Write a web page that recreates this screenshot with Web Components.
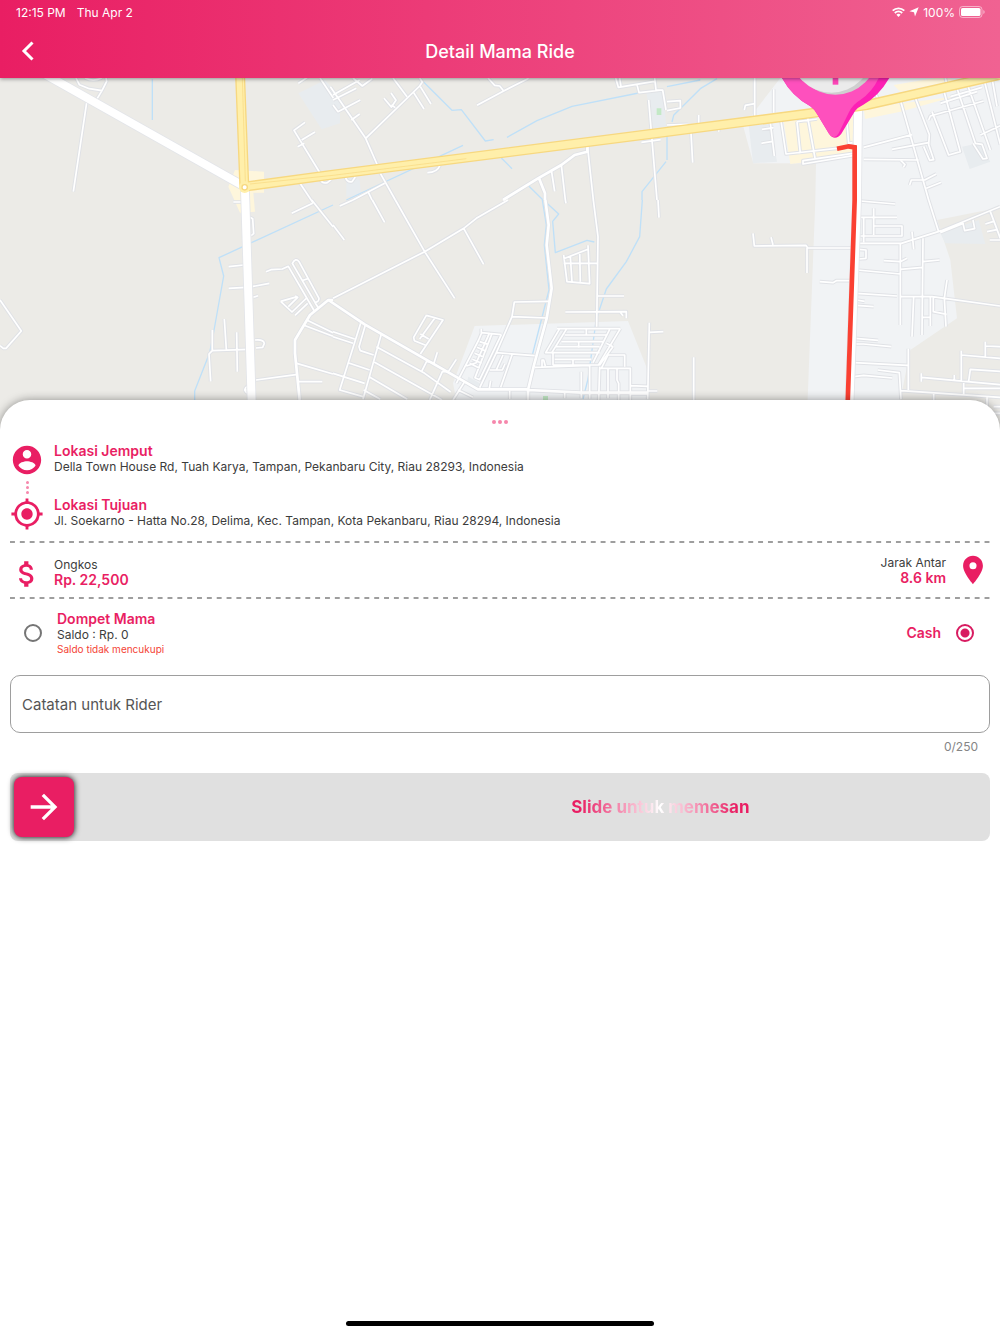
<!DOCTYPE html>
<html lang="id">
<head>
<meta charset="utf-8">
<meta name="viewport" content="width=device-width, initial-scale=1">
<title>Detail Mama Ride</title>
<style>
  html, body { margin: 0; }
  body {
    font-family: Inter, Roboto, "Liberation Sans", sans-serif;
    color: #3c3c3c;
    background: #fff;
    --pink: #e91e63;
  }
</style>
</head>
<body>
<ride-page>
  <app-bar slot="bar" heading="Detail Mama Ride" time="12:15 PM" date="Thu Apr 2" battery="100%"></app-bar>
  <ride-map slot="map"></ride-map>
  <location-row icon="person" heading="Lokasi Jemput">Della Town House Rd, Tuah Karya, Tampan, Pekanbaru City, Riau 28293, Indonesia</location-row>
  <dot-trail></dot-trail>
  <location-row icon="target" heading="Lokasi Tujuan">Jl. Soekarno - Hatta No.28, Delima, Kec. Tampan, Kota Pekanbaru, Riau 28294, Indonesia</location-row>
  <dash-line class="spaced"></dash-line>
  <fare-summary fare="Rp. 22,500" distance="8.6 km"></fare-summary>
  <dash-line></dash-line>
  <payment-options></payment-options>
  <rider-note max="250"></rider-note>
  <slide-button>Slide untuk memesan</slide-button>
</ride-page>

<script>
const icons = {
  person: '<path d="M12 2C6.48 2 2 6.48 2 12s4.48 10 10 10 10-4.48 10-10S17.52 2 12 2zm0 3c1.66 0 3 1.34 3 3s-1.34 3-3 3-3-1.34-3-3 1.34-3 3-3zm0 14.2c-2.5 0-4.71-1.28-6-3.22.03-1.99 4-3.08 6-3.08 1.99 0 5.97 1.09 6 3.08-1.29 1.94-3.5 3.22-6 3.22z"/>',
  target: '<path d="M12 8c-2.21 0-4 1.79-4 4s1.79 4 4 4 4-1.79 4-4-1.79-4-4-4zm8.94 3A8.994 8.994 0 0 0 13 3.06V1h-2v2.06A8.994 8.994 0 0 0 3.06 11H1v2h2.06A8.994 8.994 0 0 0 11 20.94V23h2v-2.06A8.994 8.994 0 0 0 20.94 13H23v-2h-2.06zM12 19c-3.87 0-7-3.13-7-7s3.13-7 7-7 7 3.13 7 7-3.13 7-7 7z"/>',
  money: '<path d="M11.8 10.9c-2.27-.59-3-1.2-3-2.15 0-1.09 1.01-1.85 2.7-1.85 1.78 0 2.44.85 2.5 2.1h2.21c-.07-1.72-1.12-3.3-3.21-3.81V3h-3v2.16c-1.94.42-3.5 1.68-3.5 3.61 0 2.31 1.91 3.46 4.7 4.13 2.5.6 3 1.48 3 2.41 0 .69-.49 1.79-2.7 1.79-2.06 0-2.87-.92-2.98-2.1h-2.2c.12 2.19 1.76 3.42 3.68 3.83V21h3v-2.15c1.95-.37 3.5-1.5 3.5-3.55 0-2.84-2.43-3.81-4.7-4.4z"/>',
  place: '<path d="M12 2C8.13 2 5 5.13 5 9c0 5.25 7 13 7 13s7-7.75 7-13c0-3.87-3.13-7-7-7zm0 9.5a2.5 2.5 0 1 1 0-5 2.5 2.5 0 0 1 0 5z"/>',
  forward: '<path d="M12 4l-1.41 1.41L16.17 11H4v2h12.17l-5.58 5.59L12 20l8-8z"/>'
};

function icon(name, size = 34) {
  return `<svg width="${size}" height="${size}" viewBox="0 0 24 24" fill="currentColor" aria-hidden="true">${icons[name]}</svg>`;
}

class RidePage extends HTMLElement {
  connectedCallback() {
    this.attachShadow({ mode: 'open' }).innerHTML = `
      <style>
        :host { display: flex; flex-direction: column; min-height: 100vh; }
        .sheet {
          position: relative;
          flex: 1;
          display: flex;
          flex-direction: column;
          box-sizing: border-box;
          margin-top: -30px;
          padding: 20px 10px 8px;
          border-radius: 30px 30px 0 0;
          background: #fff;
          box-shadow: 0 0 10px rgba(0,0,0,0.4);
        }
        .handle { display: flex; justify-content: center; gap: 2px; margin-bottom: 19px; }
        .handle i { width: 4px; height: 4px; border-radius: 50%; background: #f687ac; }
        ::slotted(.spaced) { margin-top: 10px; }
        .home { width: 308px; height: 5px; margin: auto auto 0; border-radius: 3px; background: #000; }
      </style>
      <slot name="bar"></slot>
      <slot name="map"></slot>
      <main class="sheet">
        <div class="handle"><i></i><i></i><i></i></div>
        <slot></slot>
        <div class="home"></div>
      </main>`;
  }
}

class AppBar extends HTMLElement {
  connectedCallback() {
    const get = name => this.getAttribute(name);
    this.attachShadow({ mode: 'open' }).innerHTML = `
      <style>
        :host {
          display: block;
          position: relative;
          z-index: 1;
          color: #fff;
          background: linear-gradient(90deg, #e91e63, #f06292);
          box-shadow: 0 1px 4px rgba(0,0,0,0.4);
        }
        .status {
          display: flex;
          align-items: center;
          height: 24px;
          padding: 0 15px 0 16px;
          font-size: 12px;
        }
        .status span { margin-right: 11px; }
        .right { display: flex; align-items: center; gap: 4px; margin-left: auto; }
        .bar { display: grid; grid-template-columns: 56px 1fr 56px; align-items: center; height: 54px; }
        button { display: flex; padding: 12px 16px; border: 0; background: none; color: inherit; cursor: pointer; }
        h1 { margin: 0; font-size: 18px; font-weight: 500; text-align: center; }
      </style>
      <div class="status">
        <span>${get('time')}</span><span>${get('date')}</span>
        <div class="right">
          <svg width="13" height="10" viewBox="0 0 13 10" fill="none" stroke="#fff" stroke-width="1.8"><path d="M.7 3.7a8.4 8.4 0 0 1 11.6 0M2.8 6a5.3 5.3 0 0 1 7.4 0"/><path d="M6.5 10L4.4 7.8a3 3 0 0 1 4.2 0z" fill="#fff" stroke="none"/></svg>
          <svg width="10" height="10" viewBox="0 0 10 10" fill="#fff"><path d="M9.7.3L6 9.5 5 5.2.4 4.2z"/></svg>
          ${get('battery')}
          <svg width="26" height="12" viewBox="0 0 26 12"><rect x=".5" y=".5" width="22.5" height="11" rx="3" fill="none" stroke="#fff" stroke-opacity=".5"/><rect x="2" y="2" width="19.5" height="8" rx="1.6" fill="#fff"/><path d="M24.3 4v4q1.4-.6 1.4-2t-1.4-2" fill="#fff" opacity=".5"/></svg>
        </div>
      </div>
      <header class="bar">
        <button aria-label="Kembali"><svg width="24" height="24" viewBox="0 0 24 24" fill="none" stroke="currentColor" stroke-width="3"><path d="M16.5 3.5L8 12l8.5 8.5"/></svg></button>
        <h1>${get('heading')}</h1>
      </header>`;
  }
}

// Map geometry, three units per pixel, split into sectors of 1000 x 600 units
const sectors = [
  {
    at: '0 0',
    minor: `M228 234l10 20 30 12 38 6 14-28-2-12M306 272l-16 26M260 308L220 575M255 234q25 12 50 0
      M895 250l30-20M960 234l40 60M915 367l-33 24 78 128M905 420l40-24M893 440l20-10M900 550l40 60M962 540q5 12 20 8l12-10`,
    major: '',
    water: 'M457 238V360'
  },
  {
    at: '999 0',
    minor: `M0 285l80-45M0 300l70-35M60 234l28 24 30-22M-8 260l106 155 35 80M0 315l15 20 67-35M55 360l25-18M98 415L260 258l8-12-8-12
      M180 234l42 56M240 275l33 52M262 260l32 52M153 295l22 26 14-20-15-22M175 315l12 8M465 234l20 22 15 2 12 15 75-38M512 273l-80 43
      M848 234l8 28 108-18M860 234l4 26M912 254l6 24 70-8M965 234l4 36 20 0 10 60M947 300l25 300M925 427l58-8
      M142 520l45 80M155 550L60 600M105 575l12 25M37 530q5 18 20 15l10-14M283 518q30 0 38-22
      M763 435l18 165M655 510l10 64M685 495l12 105`,
    major: 'M763 435v20l-38 10-40 30-70 40L510 600M618 535l18 45v20',
    water: 'M262 236l95 95 28-2 72 94 25-4M522 412l90-50 105-43 200-40M390 436L40 600M505 474l32 32M999 485l-72 90v25M585 556l45 44'
  },
  {
    at: '2001 0',
    minor: `M263 234v115M232 330l3-14 28-5M320 268v70M0 305l40-3v22l-40 8M0 375l62-2M95 345v28M155 385v10M72 398l5 90
      M310 368l12 100M285 388l35-5M283 430l35-6M342 362l15 100 200-22M390 365l10 95M390 365l60-8M422 352l22 122M558 467l-150 25v-10l150-22M540 370l5 60 12-2
      M590 442l145-38M590 478l165 2M675 448l110-20M700 300l85 300M745 294l42 110-2 30 15 45-12 2-18-42M700 480l14 14-5 8
      M728 555l5-15h40l35-18M778 565l45-18M830 270l50 185-35 10-50-130M865 250l60 180 20 3 15 42-12 2-30-47M900 250l70 200M820 310l110-35
      M785 360l5-12 160-45M950 234l50 200M940 405l60-28M975 234l15 85M835 234l5 20M850 290l95-28M625 280l10 20`,
    major: '',
    water: 'M0 260l100-20M150 236l-50 30-80 80-5 20M0 400v80'
  },
  {
    at: '0 600',
    minor: `M875 40l63-30M935 0l64 80M750 52l8 4 3 45-8 6M686 200l45-5M686 265l50-3M755 260l53-10M760 292l14-5
      M798 215l15-6 34-2 18-8 78 134M877 190q10-18 20-5l60 110q0 12-12 12zM905 242l18-6M945 308l10 15M842 304l50-14M842 304l34 32 44-42M865 320l28-28-8-4M885 346l38-36
      M637 390v62l108-4M637 452l-10 10 5 82M673 357l6 92M710 397l2 118M765 420q25-3 28 10l-5 12-20 2M768 540l120-16M890 490l109 32M897 545h70
      M745 557q-20 12 0 24M732 570h12M0 300l64 93-46 52h-8l-10-8M920 360l79 38M910 375l89 34M700 6h30`,
    major: 'M999 300h-14l-55 45-45 75v40l14 140',
    water: 'M999 15L657 173l14 55-32 180-10 50-45 115v30'
  },
  {
    at: '999 600',
    minor: `M0 295L275 155 395 83 430 55 525 0M187 0L275 155l90 140M392 85l60 108M118 0l37 67M0 75l34 45M20 18L60 0M697 0l2 10M781 0l14 110-4 270M795 288h78M697 336l183-1v20M862 337l8 10
      M975 0l3 53M949 368l-5 230M949 397l42-2M692 165l10 80 68 6-5-115M765 148l-73 28M692 190h100M712 170l5 75M740 155l2 90
      M651 304l-107 2-7 44 104 4M537 350l-47 108 115 9M490 458l-50 105M280 346l50 14-68 102M280 346l-38 66 2 10 34 14M305 355l-45 62M262 402l25 15
      M0 395l65 22M0 410l60 20M83 370L20 570l70 20M97 375L78 440l4 12 40 13M145 402L90 598M45 488l65 22M0 520l95 30M130 440l145 80 78 56M122 485l205 115M108 530l115 68M92 570l50 28
      M313 457l-10 32-22-5-15 30M370 478l-24 37-18 0-38 85M395 545l-35 55M375 570l45 22
      M445 386v12l60 6M447 396l-10 24-67 130M470 398l-40 90-30 10M505 404l-65 135-14-6 50-130M440 425l25 8M432 442l28 12M425 460l28 12M418 478l28 12M410 490l30 15M470 510h38l8-18M490 510l20-45M538 462l-35 100M473 542l-4 24
      M672 386h190M680 386l-42 72h22M700 388l-45 72M695 405h125M685 425h125M665 440h135M660 458h140M665 478h110M660 495h140M660 458v38M605 502l165-6M627 502v-22h5l5 18M760 386v18M737 425v18M720 478v18
      M862 386l-65 108M830 388l-50 100M840 440l-40 55M820 430l20 10M770 496v100M800 500l-3 100M825 465h50v35M800 505h92v52l52 2M825 465l-20 40M892 557v25h50M852 505v35l5 10v50M825 505v90M745 515v80M892 557v43M530 572v25M695 575v20M740 580h150M945 573h28`,
    major: 'M-14 300L95 373l340 195h150M637 0l10 75-6 60 15 130-15 90-38 140-18 75v35M585 570l160 8 200 0',
    water: 'M628 0l12 75-6 60 14 135-50 195M642 10l35 32-18 22 8 94 95-37 22 5M928 0l-8 110-40 75-60 82-30 90-25 180-15 60'
  },
  {
    at: '2001 600',
    minor: `M258 100l4 38 155-2 5 8h130M312 112l6 22M420 144v75M458 245l40 3 10-6h42M80 472v128
      M580 3l105 9M580 52h110M620 25v80M620 78h85v30H580M590 52v75M578 130h125l120-38L999 20M575 148l22 2v25l-22 2M735 95l5 53M785 0l30 95M820 98l70-28M888 70l5 22 30-6-5-26
      M700 130v245M650 182l50 3 20-10M700 208l68-6M768 115l-3 290M768 185l50-5M570 210l130 12M568 280l122 8M700 290h95l204 28M568 300l25 4M568 316l52 4
      M740 290l-5 120M790 290v88M799 290v45l40 8M768 352h20M840 240l-8 55 5 85M565 415l68 6M560 432h30l83 8M562 488l160 8M632 510l65 8 5 80M560 530l30-4 86 8
      M724 446v124M702 572l297 20M800 580v20M763 520v25M763 532l236 22M862 525v18M883 452v90M883 465l116 10M955 425v45M955 438l44 2M905 543l5-35 89 6M890 545v38M890 565h109
      M960 590v60M970 35l30 80M955 72l25-8M960 95l30-6M968 120h31M980 620h20M960 640h40`,
    major: '',
    water: ''
  }
];

function drawRoads(kind) {
  return sectors.map(s => `<path transform="translate(${s.at})" d="${s[kind]}"/>`).join('');
}

class RideMap extends HTMLElement {
  connectedCallback() {
    this.attachShadow({ mode: 'open' }).innerHTML = `
      <style>
        :host { display: block; background: #ecebe7; }
        svg { display: block; width: 100%; height: 352px; }
        g { fill: none; stroke-linejoin: round; }
      </style>
      <svg viewBox="0 234 3000 1056" preserveAspectRatio="xMidYMin slice" role="img" aria-label="Peta rute">
        <path fill="#f1f3f5" d="M2341 234L2271 325 2230 380 2260 490H2448L2446 600 2419 1300H3001V1200H2701L2731 1050 2871 955 2851 780 2811 660 3001 622V234zM1424 978L1884 963 1939 1100 1949 1200H1369L1359 1150z"/>
        <path fill="#ecebe7" d="M2701 1200H3001V1300H2701z"/>
        <path fill="#e8ecef" d="M895 280l80-40 45 50v80l-55 18zM2246 375l65-5 20 115-72 5zM2886 440l50-10 35 55-62 22zM2821 700l115-40 20 72-120-2zM1939 280l50-10 10 110-39 5zM1039 530l40 10 5 50h-45zM1405 1130l35 20-10 15-30-15z"/>
        <path fill="#fef6dc" d="M2351 365l210-20-5 125-185 22zM2591 325l270-35-160 45-106 22zM2681 255l150-25 30 10-160 35zM705 510l87 5v63h-32l5 57-45 3-35-78z"/>
        <path fill="#c3e9c6" d="M1970 325h14v20h-14zM1629 1188h15v12h-15z"/>
        <g stroke="#bfe0f8" stroke-width="4">${drawRoads('water')}</g>
        <g stroke="#e0e2e6" stroke-width="11">${drawRoads('minor')}</g>
        <g stroke="#e0e2e6" stroke-width="13">${drawRoads('major')}</g>
        <g stroke="#fff" stroke-width="5">${drawRoads('minor')}</g>
        <g stroke="#fff" stroke-width="8">${drawRoads('major')}</g>
        <g stroke="#e3e5e9" stroke-width="29"><path d="M130 220L725 555M735 570L758 1300M2574 330L2571 600 2545 1300"/></g>
        <g stroke="#fff" stroke-width="24"><path d="M130 220L725 555M735 570L758 1300M2574 330L2571 600 2545 1300"/></g>
        <g stroke="#f7d880" stroke-width="30"><path d="M720 220L733 560 999 524 1998 396 2431 340 2600 315 2800 270 3010 222"/></g>
        <g stroke="#ffefaa" stroke-width="22"><path d="M720 220L733 560 999 524 1998 396 2431 340 2600 315 2800 270 3010 222"/></g>
        <g stroke="#f7d880" stroke-width="2"><path d="M727 234l9 310M750 552l249-26 400-50"/></g>
        <circle cx="734" cy="562" r="17" fill="#ffefaa"/>
        <circle cx="734" cy="562" r="8" fill="#fff" stroke="#f7d880" stroke-width="4"/>
        <path d="M2511 446l35-7 18 3v158l-24 700" fill="none" stroke="#fa4032" stroke-width="14"/>
        <path fill="#fd20b5" d="M2346 234q30 55 85 85 14 10 22 26l34 56q8 12 18 12t19-12l41-68q8-11 25-19 45-24 78-80V150H2346z"/>
        <path fill="#fe50bd" d="M2346 234q30 55 85 85 14 10 22 26l34 56q8 12 16 10 8-2 13-11l30-62q12-25 35-38 38-26 57-70V150H2346z"/>
        <circle cx="2506" cy="157" r="127" fill="#cfcfcf"/>
        <circle cx="2494" cy="154" r="124" fill="#ebebeb"/>
        <path fill="#fd45b8" d="M2498 180h17v74h-17z"/>
      </svg>`;
  }
}

class LocationRow extends HTMLElement {
  connectedCallback() {
    this.attachShadow({ mode: 'open' }).innerHTML = `
      <style>
        :host { display: flex; gap: 10px; }
        svg { flex: none; color: var(--pink); }
        h2 { margin: 0; font-size: 14px; line-height: 16px; font-weight: 600; color: var(--pink); }
        p { margin: 0; font-size: 12px; line-height: 16px; }
      </style>
      ${icon(this.getAttribute('icon'))}
      <div>
        <h2>${this.getAttribute('heading')}</h2>
        <p><slot></slot></p>
      </div>`;
  }
}

class DotTrail extends HTMLElement {
  connectedCallback() {
    this.attachShadow({ mode: 'open' }).innerHTML = `
      <style>
        :host { display: flex; flex-direction: column; align-items: center; justify-content: center; gap: 2px; width: 34px; height: 20px; }
        i { width: 3px; height: 3px; border-radius: 50%; background: #f687ac; }
      </style>
      <i></i><i></i><i></i>`;
  }
}

class DashLine extends HTMLElement {
  connectedCallback() {
    this.attachShadow({ mode: 'open' }).innerHTML = `
      <style>
        :host {
          display: block;
          height: 2px;
          background: linear-gradient(90deg, #9e9e9e 5px, transparent 5px) 0 0 / calc((100% - 5px) / 99) 2px;
        }
      </style>`;
  }
}

class FareSummary extends HTMLElement {
  connectedCallback() {
    this.attachShadow({ mode: 'open' }).innerHTML = `
      <style>
        :host { display: flex; justify-content: space-between; height: 38px; padding: 10px 0 6px; }
        .item { display: flex; gap: 10px; }
        .fare { align-self: flex-end; }
        .distance { align-self: flex-start; align-items: center; text-align: right; }
        svg { color: var(--pink); }
        dl { margin: 0; font-size: 12px; line-height: 15px; }
        dd { margin: 0; font-size: 14px; font-weight: 600; color: var(--pink); }
      </style>
      <div class="item fare">${icon('money')}<dl><dt>Ongkos</dt><dd>${this.getAttribute('fare')}</dd></dl></div>
      <div class="item distance"><dl><dt>Jarak Antar</dt><dd>${this.getAttribute('distance')}</dd></dl>${icon('place')}</div>`;
  }
}

class PaymentOptions extends HTMLElement {
  connectedCallback() {
    this.attachShadow({ mode: 'open' }).innerHTML = `
      <style>
        :host { display: flex; justify-content: space-between; align-items: center; padding: 12px 16px 20px 14px; }
        label { display: flex; align-items: center; gap: 15px; font-size: 12px; line-height: 16px; }
        label span { display: block; }
        .name { font-size: 14px; font-weight: 600; color: var(--pink); }
        .error { font-size: 10px; line-height: 12px; color: #f44336; }
        input {
          appearance: none;
          width: 18px;
          height: 18px;
          margin: 0;
          border: 2px solid #757575;
          border-radius: 50%;
        }
        input:checked {
          border-color: #d81b60;
          background: radial-gradient(circle, #d81b60 4px, transparent 5px);
        }
      </style>
      <label>
        <input type="radio" name="payment" value="wallet">
        <span>
          <span class="name">Dompet Mama</span>
          <span>Saldo : Rp. 0</span>
          <span class="error">Saldo tidak mencukupi</span>
        </span>
      </label>
      <label><span class="name">Cash</span><input type="radio" name="payment" value="cash" checked></label>`;
  }
}

class RiderNote extends HTMLElement {
  connectedCallback() {
    const max = this.getAttribute('max');
    this.attachShadow({ mode: 'open' }).innerHTML = `
      <style>
        :host { display: flex; flex-direction: column; }
        input {
          box-sizing: border-box;
          width: 100%;
          height: 58px;
          padding: 0 11px;
          border: 1px solid #9e9e9e;
          border-radius: 10px;
          background: none;
          font: inherit;
          font-size: 15px;
          color: inherit;
        }
        input::placeholder { color: #555; opacity: 1; }
        output { align-self: flex-end; padding: 6px 12px 18px; font-size: 12px; line-height: 16px; color: #858585; }
      </style>
      <input id="note" type="text" maxlength="${max}" placeholder="Catatan untuk Rider" aria-label="Catatan untuk Rider">
      <output for="note">0/${max}</output>`;
    const input = this.shadowRoot.querySelector('input');
    input.addEventListener('input', () => {
      this.shadowRoot.querySelector('output').textContent = `${input.value.length}/${max}`;
    });
  }
}

class SlideButton extends HTMLElement {
  connectedCallback() {
    this.attachShadow({ mode: 'open' }).innerHTML = `
      <style>
        :host { display: flex; align-items: center; justify-content: space-between; padding: 4px; border-radius: 8px; background: #e0e0e0; }
        button {
          display: flex;
          align-items: center;
          justify-content: center;
          width: 60px;
          height: 60px;
          padding: 0;
          border: 0;
          border-radius: 8px;
          color: #fff;
          background: var(--pink);
          box-shadow: 0 0 6px #000;
          cursor: pointer;
        }
        .label { width: 67%; text-align: center; font-size: 17px; font-weight: 700; }
        .shimmer {
          color: transparent;
          background: linear-gradient(90deg, var(--pink) 5%, #fff 50%, var(--pink) 92%);
          background-clip: text;
          -webkit-background-clip: text;
        }
      </style>
      <button aria-label="Geser untuk memesan">${icon('forward', 40)}</button>
      <div class="label"><span class="shimmer"><slot></slot></span></div>`;
  }
}

customElements.define('ride-page', RidePage);
customElements.define('app-bar', AppBar);
customElements.define('ride-map', RideMap);
customElements.define('location-row', LocationRow);
customElements.define('dot-trail', DotTrail);
customElements.define('dash-line', DashLine);
customElements.define('fare-summary', FareSummary);
customElements.define('payment-options', PaymentOptions);
customElements.define('rider-note', RiderNote);
customElements.define('slide-button', SlideButton);
</script>
</body>
</html>
